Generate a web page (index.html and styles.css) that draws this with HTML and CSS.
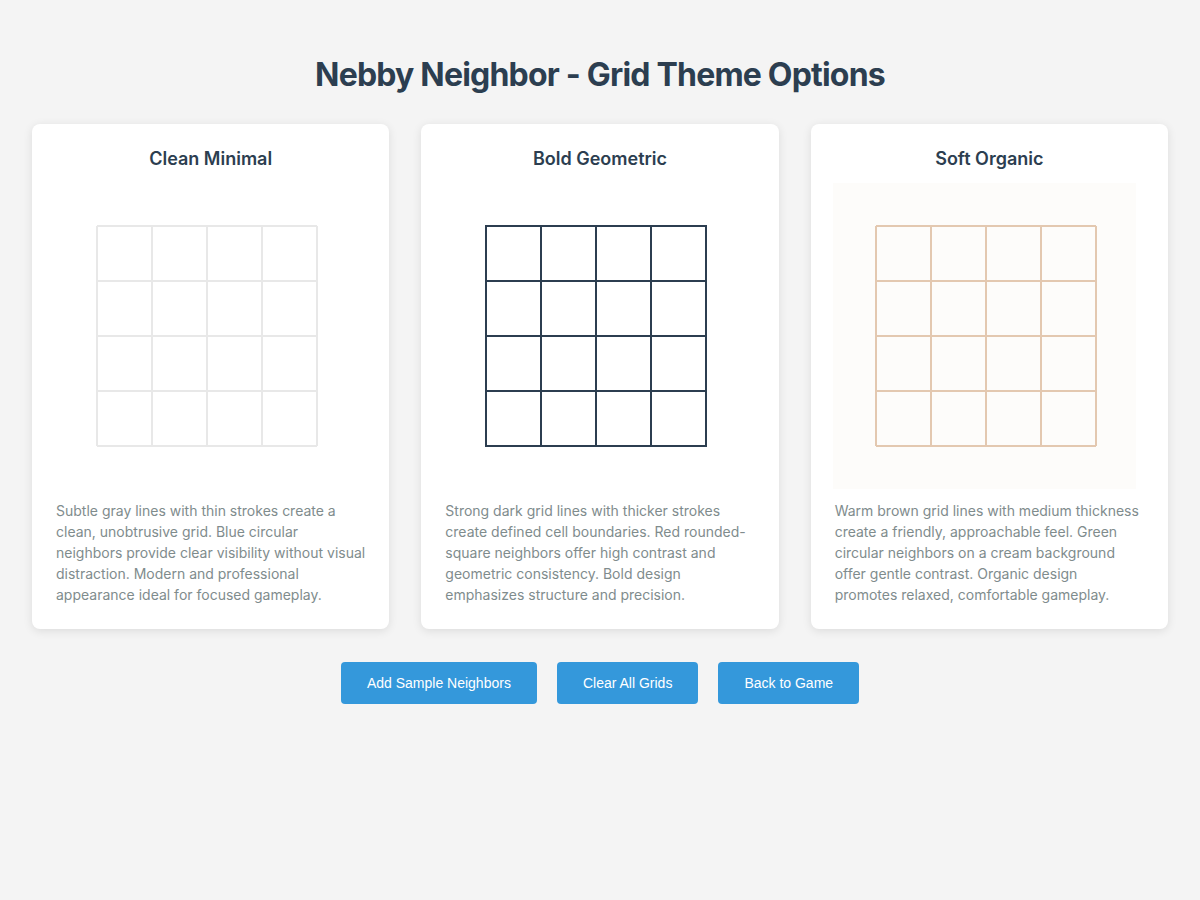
FILE: index.html
```html
<!DOCTYPE html>
<html lang="en">
<head>
<meta charset="utf-8">
<title>Nebby Neighbor - Grid Theme Options</title>
<link rel="stylesheet" href="styles.css">
</head>
<body>
<div class="page">
  <h1 class="title">Nebby Neighbor - Grid Theme Options</h1>
  <div class="cards">
    <div class="card">
      <h3 class="card-title">Clean Minimal</h3>
      <svg class="grid" width="303" height="306" viewBox="0 0 303 306">
        <rect x="0" y="0" width="303" height="306" fill="#ffffff"/>
        <g stroke="#e8e8e8" stroke-width="2" fill="none">
          <line x1="43" y1="43" x2="43" y2="263"/><line x1="98" y1="43" x2="98" y2="263"/><line x1="153" y1="43" x2="153" y2="263"/><line x1="208" y1="43" x2="208" y2="263"/><line x1="263" y1="43" x2="263" y2="263"/>
          <line x1="43" y1="43" x2="263" y2="43"/><line x1="43" y1="98" x2="263" y2="98"/><line x1="43" y1="153" x2="263" y2="153"/><line x1="43" y1="208" x2="263" y2="208"/><line x1="43" y1="263" x2="263" y2="263"/>
        </g>
      </svg>
      <p class="desc">Subtle gray lines with thin strokes create a clean, unobtrusive grid. Blue circular neighbors provide clear visibility without visual distraction. Modern and professional appearance ideal for focused gameplay.</p>
    </div>
    <div class="card">
      <h3 class="card-title">Bold Geometric</h3>
      <svg class="grid" width="303" height="306" viewBox="0 0 303 306">
        <rect x="0" y="0" width="303" height="306" fill="#ffffff"/>
        <g stroke="#2c3e50" stroke-width="2" fill="none">
          <line x1="43" y1="42" x2="43" y2="264"/><line x1="98" y1="42" x2="98" y2="264"/><line x1="153" y1="42" x2="153" y2="264"/><line x1="208" y1="42" x2="208" y2="264"/><line x1="263" y1="42" x2="263" y2="264"/>
          <line x1="42" y1="43" x2="264" y2="43"/><line x1="42" y1="98" x2="264" y2="98"/><line x1="42" y1="153" x2="264" y2="153"/><line x1="42" y1="208" x2="264" y2="208"/><line x1="42" y1="263" x2="264" y2="263"/>
        </g>
      </svg>
      <p class="desc">Strong dark grid lines with thicker strokes create defined cell boundaries. Red rounded-square neighbors offer high contrast and geometric consistency. Bold design emphasizes structure and precision.</p>
    </div>
    <div class="card">
      <h3 class="card-title">Soft Organic</h3>
      <svg class="grid" width="303" height="306" viewBox="0 0 303 306">
        <rect x="0" y="0" width="303" height="306" fill="#fdfcfa"/>
        <g stroke="#e3c8b0" stroke-width="2" fill="none">
          <line x1="43" y1="43" x2="43" y2="263"/><line x1="98" y1="43" x2="98" y2="263"/><line x1="153" y1="43" x2="153" y2="263"/><line x1="208" y1="43" x2="208" y2="263"/><line x1="263" y1="43" x2="263" y2="263"/>
          <line x1="43" y1="43" x2="263" y2="43"/><line x1="43" y1="98" x2="263" y2="98"/><line x1="43" y1="153" x2="263" y2="153"/><line x1="43" y1="208" x2="263" y2="208"/><line x1="43" y1="263" x2="263" y2="263"/>
        </g>
      </svg>
      <p class="desc desc-narrow">Warm brown grid lines with medium thickness create a friendly, approachable feel. Green circular neighbors on a cream background offer gentle contrast. Organic design promotes relaxed, comfortable gameplay.</p>
    </div>
  </div>
  <div class="actions">
    <button class="btn">Add Sample Neighbors</button>
    <button class="btn">Clear All Grids</button>
    <button class="btn">Back to Game</button>
  </div>
</div>
</body>
</html>
```
FILE: styles.css
```css
html, body {
  margin: 0;
  padding: 0;
  background: #f4f4f4;
}
body {
  font-family: Inter, "Noto Sans", sans-serif;
  color: #2c3e50;
}
.page {
  padding: 32px;
}
.title {
  margin: 24px 0 30px;
  text-align: center;
  font-size: 32px;
  line-height: 38px;
  font-weight: 700;
  letter-spacing: -0.8px;
  color: #2c3e50;
}
.cards {
  display: grid;
  grid-template-columns: repeat(3, 1fr);
  gap: 32px;
}
.card {
  background: #ffffff;
  border-radius: 8px;
  box-shadow: 0 2px 10px rgba(0, 0, 0, 0.1);
  padding: 24px;
}
.card-title {
  margin: 0;
  text-align: center;
  font-size: 18px;
  line-height: 22px;
  font-weight: 600;
  color: #2c3e50;
}
.grid {
  display: block;
  margin: 13px 0 0 -2px;
}
.desc {
  margin: 11px 0 0;
  font-size: 14px;
  line-height: 21px;
  color: #7f8c8d;
}
.desc-narrow {
  padding-right: 3px;
}
.actions {
  display: flex;
  justify-content: center;
  gap: 20px;
  margin-top: 33px;
}
.btn {
  background: #3498db;
  color: #ffffff;
  border: none;
  border-radius: 4px;
  height: 42px;
  padding: 0 26px;
  font-family: "Liberation Sans", Arial, sans-serif;
  font-size: 14px;
  cursor: pointer;
}
```
